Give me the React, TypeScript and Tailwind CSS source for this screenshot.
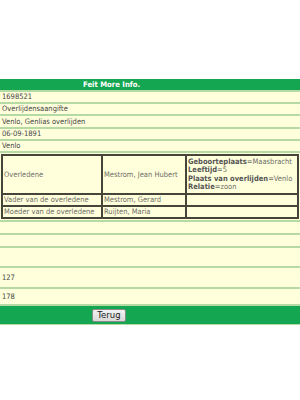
export default function App() {
  return (
    <div className="w-[300px] h-[400px] bg-white pt-[79px] font-['DejaVu_Sans_Condensed','DejaVu_Sans',sans-serif] text-[7.5px] text-[#444]">
      <div className="flex flex-col gap-[2px] bg-[#b5daa3] pb-[1px]">
        <div className="h-[11px] bg-[#15a651] text-white font-bold pl-[83px] leading-[11px] text-[7.7px]">
          Feit More Info.
        </div>
        <div className="h-[10px] bg-[#ffffdc] px-[2px] leading-[10px]">1698521</div>
        <div className="h-[10px] bg-[#ffffdc] px-[2px] leading-[10px]">Overlijdensaangifte</div>
        <div className="h-[11px] bg-[#ffffdc] px-[2px] leading-[11px]">Venlo, Genlias overlijden</div>
        <div className="h-[10px] bg-[#ffffdc] px-[2px] leading-[10px]">06-09-1891</div>
        <div className="h-[10px] bg-[#ffffdc] px-[2px] leading-[10px]">Venlo</div>
        <div className="bg-[#ffffdc] p-[1px]">
          <table className="w-[298px] border-collapse border-2 border-[#45453a] text-[#6e6e68]">
            <tbody>
              <tr className="h-[39px]">
                <td className="w-[100px] border-2 border-[#45453a] px-[1px] align-middle">Overledene</td>
                <td className="w-[84px] border-2 border-[#45453a] px-[1px] align-middle">Mestrom, Jean Hubert</td>
                <td className="border-2 border-[#45453a] px-[1px] align-middle leading-[8.5px]">
                  <div><b className="text-[#555]">Geboorteplaats</b>=Maasbracht</div>
                  <div><b className="text-[#555]">Leeftijd</b>=5</div>
                  <div><b className="text-[#555]">Plaats van overlijden</b>=Venlo</div>
                  <div><b className="text-[#555]">Relatie</b>=zoon</div>
                </td>
              </tr>
              <tr className="h-[12px]">
                <td className="border-2 border-[#45453a] px-[1px] leading-[8px]">Vader van de overledene</td>
                <td className="border-2 border-[#45453a] px-[1px] leading-[8px]">Mestrom, Gerard</td>
                <td className="border-2 border-[#45453a] px-[1px]"></td>
              </tr>
              <tr className="h-[12px]">
                <td className="border-2 border-[#45453a] px-[1px] leading-[8px]">Moeder van de overledene</td>
                <td className="border-2 border-[#45453a] px-[1px] leading-[8px]">Ruijten, Maria</td>
                <td className="border-2 border-[#45453a] px-[1px]"></td>
              </tr>
            </tbody>
          </table>
        </div>
        <div className="h-[11px] bg-[#ffffdc]"></div>
        <div className="h-[11px] bg-[#ffffdc]"></div>
        <div className="h-[18px] bg-[#ffffdc]"></div>
        <div className="h-[19px] bg-[#ffffdc] px-[2px] flex items-center">127</div>
        <div className="h-[15px] bg-[#ffffdc] px-[2px] flex items-center">178</div>
        <div className="h-[18px] bg-[#15a651] flex items-center pl-[92px]">
          <button className="h-[13px] w-[34px] bg-gradient-to-b from-[#f2f2f2] to-[#d9d9d9] border border-[#8a8a8a] rounded-[2px] text-[8.5px] leading-[11px] text-[#222] font-['DejaVu_Sans','Verdana',sans-serif]">
            Terug
          </button>
        </div>
      </div>
    </div>
  );
}
